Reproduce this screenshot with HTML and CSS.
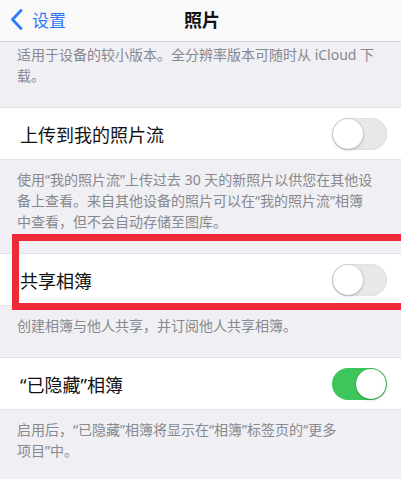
FILE: index.html
```html
<!DOCTYPE html>
<html lang="zh-CN">
<head>
<meta charset="utf-8">
<title>照片</title>
<link rel="stylesheet" href="styles.css">
</head>
<body>
<header class="nav">
  <a class="back">
    <svg class="chev" width="13" height="21" viewBox="0 0 13 21"><path d="M11 1.5 L2.5 10.5 L11 19.5" fill="none" stroke="#2f7bf5" stroke-width="2.8" stroke-linecap="round" stroke-linejoin="round"/></svg>
    <span>设置</span>
  </a>
  <h1 class="title">照片</h1>
</header>
<main class="list">
  <p class="note first">适用于设备的较小版本。全分辨率版本可随时从 iCloud 下载。</p>
  <div class="row"><span class="label">上传到我的照片流</span><span class="switch"></span></div>
  <p class="note">使用“我的照片流”上传过去 30 天的新照片以供您在其他设备上查看。来自其他设备的照片可以在“我的照片流”相簿<br>中查看，但不会自动存储至图库。</p>
  <div class="row"><span class="label">共享相簿</span><span class="switch"></span></div>
  <p class="note">创建相簿与他人共享，并订阅他人共享相簿。</p>
  <div class="row"><span class="label">“已隐藏”相簿</span><span class="switch on"></span></div>
  <p class="note">启用后，“已隐藏”相簿将显示在“相簿”标签页的“更多<br>项目”中。</p>
</main>
<div class="mark"></div>
</body>
</html>
```
FILE: styles.css
```css
* { box-sizing: border-box; }
html, body { margin: 0; }
body {
  width: 401px;
  height: 479px;
  overflow: hidden;
  position: relative;
  background: #efeff4;
  /* Latin face first so curly quotes stay narrow, CJK falls through */
  font-family: "Noto Sans", "Noto Sans CJK SC", sans-serif;
  color: #111;
}
.nav {
  height: 42px;
  background: #f9f9fa;
  border-bottom: 1px solid #cfcfd3;
  display: flex;
  align-items: center;
  justify-content: center;
  position: relative;
}
.back {
  position: absolute;
  left: 10px;
  top: 0;
  height: 41px;
  display: flex;
  align-items: center;
  gap: 9px;
  color: #2f7bf5;
  font-size: 17px;
}
.chev { display: block; margin-top: -3px; }
.back span { margin-top: -3px; }
.title {
  margin: -3px 0 0 3px;
  font-size: 18px;
  font-weight: 600;
  color: #111;
}
.list { display: flex; flex-direction: column; }
.note {
  margin: 0;
  padding: 9px 17px 21px;
  font-size: 14px;
  line-height: 21px;
  color: #88888d;
}
.note.first { padding-top: 2px; }
.row {
  height: 53px;
  background: #fff;
  border-top: 1px solid #e2e2e6;
  border-bottom: 1px solid #e2e2e6;
  display: flex;
  align-items: center;
  justify-content: space-between;
  padding: 0 14px 0 20px;
}
.label { font-size: 18px; color: #111; }
.switch {
  width: 55px;
  height: 32px;
  border-radius: 16px;
  background: #e8e8ea;
  position: relative;
  box-shadow: inset 0 0 0 1px #e0e0e2;
}
.switch::after {
  content: "";
  position: absolute;
  top: 1px;
  left: 1px;
  width: 30px;
  height: 30px;
  border-radius: 50%;
  background: #fff;
  box-shadow: 0 1px 3px rgba(0,0,0,0.22), 0 0 0 1px rgba(0,0,0,0.05);
}
.switch.on { background: #3dc65b; box-shadow: none; }
.switch.on::after { left: 24px; }
/* red highlight frame around the shared albums row */
.mark {
  position: absolute;
  left: 12px;
  top: 234px;
  width: 400px;
  height: 76px;
  border: 7px solid #ee2a36;
}
```
